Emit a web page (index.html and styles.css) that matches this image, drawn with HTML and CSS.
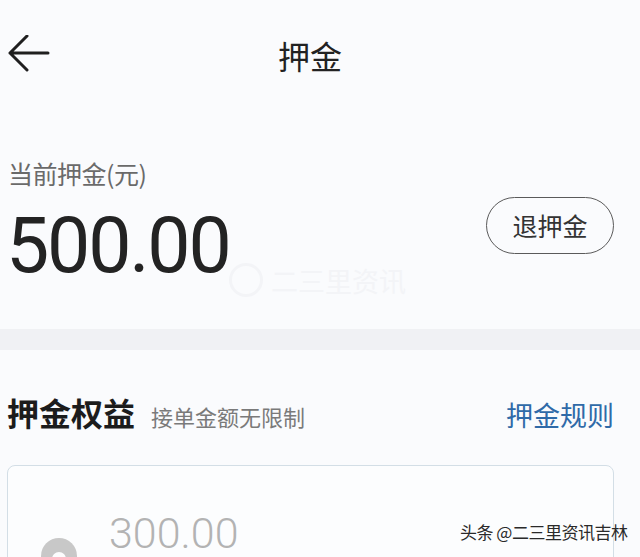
FILE: index.html
```html
<!DOCTYPE html>
<html lang="zh">
<head>
<meta charset="utf-8">
<title>押金</title>
<link rel="stylesheet" href="styles.css">
</head>
<body>
<div class="page">
  <header class="nav">
    <svg class="back" viewBox="0 0 42 38" width="42" height="38">
      <path d="M2 18 H40 M19 1 L2 18 L19 35" fill="none" stroke="#1f1f1f" stroke-width="3" stroke-linecap="round" stroke-linejoin="round"/>
    </svg>
    <h1 class="nav-title">押金</h1>
  </header>

  <section class="deposit">
    <div class="deposit-info">
      <div class="deposit-label">当前押金(元)</div>
      <div class="deposit-amount">500.00</div>
    </div>
    <button class="refund-btn">退押金</button>
    <div class="faint-mark">
      <span class="faint-ring"></span>
      <span class="faint-text">二三里资讯</span>
    </div>
  </section>

  <div class="band"></div>

  <section class="rights">
    <div class="rights-head">
      <h2 class="rights-title">押金权益</h2>
      <span class="rights-sub">接单金额无限制</span>
      <a class="rights-link">押金规则</a>
    </div>
    <div class="card">
      <span class="card-icon"></span>
      <div class="card-amount">300.00</div>
    </div>
  </section>

  <div class="credit">头条 @二三里资讯吉林</div>
</div>
</body>
</html>
```

FILE: styles.css
```css
html, body {
  margin: 0;
  padding: 0;
  background: #fafbfd;
  overflow: hidden;
}

body {
  font-family: "Noto Sans CJK SC", "Noto Sans", sans-serif;
  color: #222;
}

.page {
  position: relative;
  width: 640px;
  height: 557px;
  overflow: hidden;
}

.nav {
  height: 110px;
  display: flex;
  align-items: center;
  padding-left: 8px;
}

.back {
  display: block;
  margin-top: -2px;
}

.nav-title {
  margin: 0 0 0 228px;
  font-size: 32px;
  line-height: 1;
  font-weight: 400;
  color: #222;
}

.deposit {
  position: relative;
  height: 219px;
  display: flex;
  align-items: flex-start;
  justify-content: space-between;
  padding: 51px 26px 0 8px;
  box-sizing: border-box;
}

.deposit-label {
  font-size: 25px;
  line-height: 1;
  color: #6a6a6a;
  letter-spacing: -0.5px;
}

.deposit-amount {
  margin-top: 22px;
  margin-left: -2px;
  font-family: Roboto, "Noto Sans", sans-serif;
  font-size: 77px;
  line-height: 1;
  color: #232323;
  letter-spacing: -2.2px;
}

.refund-btn {
  margin-top: 36px;
  width: 128px;
  height: 57px;
  border: 1.5px solid #5a5a5a;
  border-radius: 29px;
  background: transparent;
  font-family: "Noto Sans CJK SC", sans-serif;
  font-size: 25px;
  color: #333;
  padding: 0;
  line-height: 1;
}

.faint-mark {
  position: absolute;
  left: 229px;
  top: 153px;
  display: flex;
  align-items: center;
  gap: 8px;
}

.faint-ring {
  width: 28px;
  height: 28px;
  border: 3px solid #f3f4f7;
  border-radius: 50%;
}

.faint-text {
  font-size: 27px;
  line-height: 1;
  color: #f3f4f7;
}

.band {
  height: 21px;
  background: #f0f1f4;
}

.rights {
  padding: 46px 26px 0 7px;
}

.rights-head {
  display: flex;
  align-items: baseline;
}

.rights-title {
  margin: 0;
  font-size: 32px;
  line-height: 1;
  font-weight: 700;
  color: #1c1c1c;
}

.rights-sub {
  margin-left: 16px;
  font-size: 22px;
  line-height: 1;
  color: #7a7a7a;
}

.rights-link {
  margin-left: auto;
  font-size: 27px;
  line-height: 1;
  color: #2f6aa8;
}

.card {
  margin-top: 37px;
  height: 160px;
  border: 1.5px solid #d3dee6;
  border-radius: 8px;
  background: #fcfdfe;
  display: flex;
  align-items: flex-start;
  padding: 46px 0 0 33px;
  box-sizing: border-box;
}

.card-icon {
  position: relative;
  width: 36px;
  height: 36px;
  margin-top: 26px;
  border-radius: 50%;
  background: #c8c8c8;
  flex: none;
}

.card-icon::after {
  content: "";
  position: absolute;
  left: 11px;
  top: 14px;
  width: 14px;
  height: 14px;
  border-radius: 50%;
  background: #fcfdfe;
}

.card-amount {
  margin-left: 32px;
  font-family: Roboto, "Noto Sans", sans-serif;
  font-size: 43px;
  font-weight: 300;
  line-height: 1;
  color: #b3b3b3;
}

.credit {
  position: absolute;
  left: 460px;
  top: 522px;
  font-size: 17px;
  line-height: 1.2;
  color: #2a2a2a;
  letter-spacing: -0.5px;
  text-shadow: 0 0 2px #fff, 0 0 2px #fff;
}
```
